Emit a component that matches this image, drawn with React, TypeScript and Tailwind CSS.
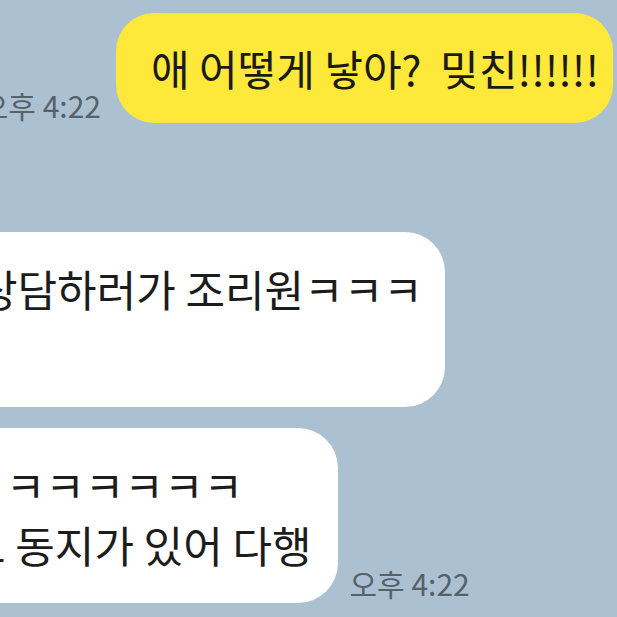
const font = "font-['Noto_Sans_CJK_KR','Noto_Sans',sans-serif]";

const Time = ({ className }: { className: string }) => (
  <span className={`shrink-0 whitespace-nowrap text-[30px] leading-[30px] text-[#56616c] ${className}`}>
    오후 4:22
  </span>
);

export default function App() {
  return (
    <div className={`w-[617px] h-[617px] overflow-hidden bg-[#abc1d2] flex flex-col ${font}`}>
      {/* my message */}
      <div className="mt-[13px] mr-[4px] flex justify-end items-end gap-[15px]">
        <Time className="mb-[3px]" />
        <div className="shrink-0 whitespace-pre rounded-[38px] bg-[#fee83a] pl-[35px] pr-[14px] py-[25px] text-[42px] leading-[60px] text-[#1a1a1a]">
          애 어떻게 낳아?  밎친!!!!!!
        </div>
      </div>

      {/* friend messages */}
      <div className="mt-[109px] -ml-[40px] self-start shrink-0 whitespace-nowrap rounded-[40px] bg-white pl-[18px] pr-[22px] pt-[26px] pb-[29px] text-[43px] leading-[60px] text-[#1c1c1c]">
        상담하러가 조리원ㅋㅋㅋ
        <br />
        &nbsp;
      </div>

      <div className="mt-[21px] -ml-[131px] flex items-end gap-[12px]">
        <div className="shrink-0 whitespace-nowrap rounded-[40px] bg-white pl-[18px] pr-[26px] pt-[26px] pb-[29px] text-[43px] leading-[60px] text-[#1c1c1c]">
          ㅋㅋㅋㅋㅋㅋㅋㅋㅋ
          <br />
          그래도 동지가 있어 다행
        </div>
        <Time className="mb-[5px]" />
      </div>
    </div>
  );
}
